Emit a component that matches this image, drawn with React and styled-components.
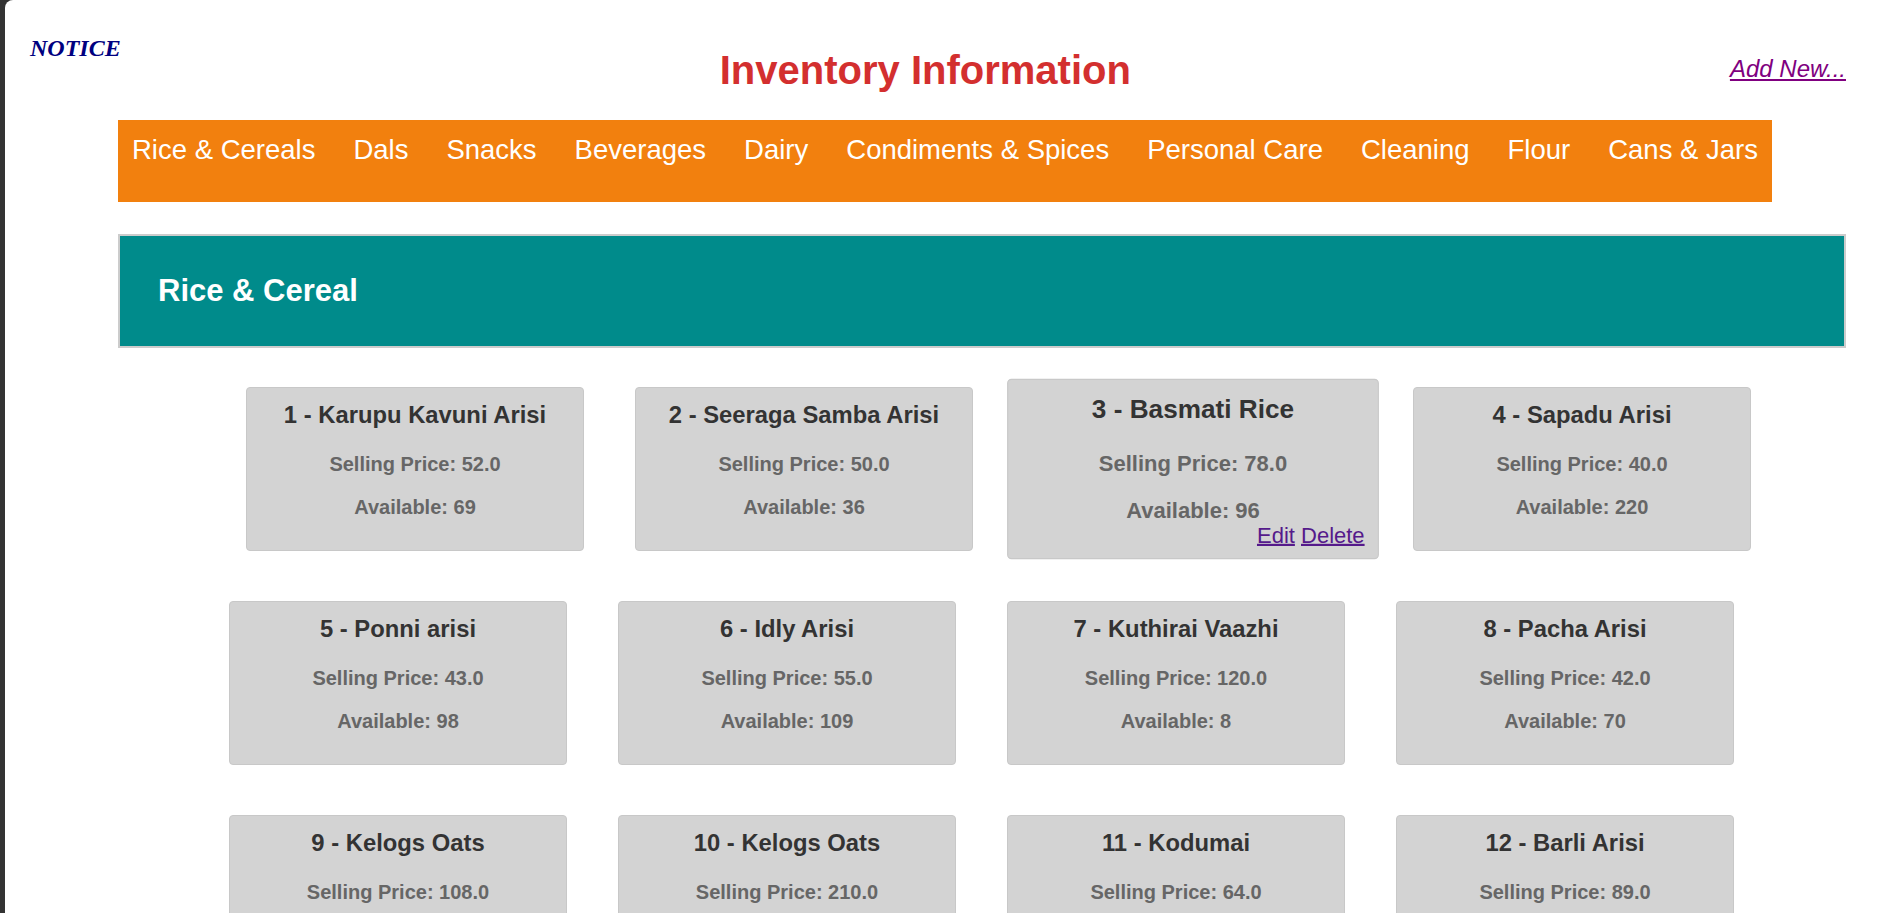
import React from "react";
import styled, { createGlobalStyle } from "styled-components";

const categories = [
  "Rice & Cereals",
  "Dals",
  "Snacks",
  "Beverages",
  "Dairy",
  "Condiments & Spices",
  "Personal Care",
  "Cleaning",
  "Flour",
  "Cans & Jars",
];

const products = [
  { id: 1, name: "Karupu Kavuni Arisi", price: "52.0", qty: 69 },
  { id: 2, name: "Seeraga Samba Arisi", price: "50.0", qty: 36 },
  { id: 3, name: "Basmati Rice", price: "78.0", qty: 96 },
  { id: 4, name: "Sapadu Arisi", price: "40.0", qty: 220 },
  { id: 5, name: "Ponni arisi", price: "43.0", qty: 98 },
  { id: 6, name: "Idly Arisi", price: "55.0", qty: 109 },
  { id: 7, name: "Kuthirai Vaazhi", price: "120.0", qty: 8 },
  { id: 8, name: "Pacha Arisi", price: "42.0", qty: 70 },
  { id: 9, name: "Kelogs Oats", price: "108.0", qty: 25 },
  { id: 10, name: "Kelogs Oats", price: "210.0", qty: 40 },
  { id: 11, name: "Kodumai", price: "64.0", qty: 50 },
  { id: 12, name: "Barli Arisi", price: "89.0", qty: 30 },
];

// split into rows of 4
const rows = [];
for (let i = 0; i < products.length; i += 4) {
  rows.push(products.slice(i, i + 4));
}

const App = () => {
  return (
    <>
      <GlobalStyle />
      <Page>
        <Header>
          <Notice>NOTICE</Notice>
          <Title>Inventory Information</Title>
          <AddNew href="#">Add New...</AddNew>
        </Header>
        <Main>
          <NavBar>
            {categories.map((c) => (
              <NavItem key={c}>{c}</NavItem>
            ))}
          </NavBar>
          <Banner>
            <BannerTitle>Rice &amp; Cereal</BannerTitle>
          </Banner>
          <CardGrid>
            {rows.map((row, idx) => (
              <CardRow key={idx} $shift={idx === 0}>
                {row.map((p) => (
                  <Card key={p.id} $raised={p.id === 3}>
                    <CardTitle>
                      {p.id} - {p.name}
                    </CardTitle>
                    <CardInfo>Selling Price: {p.price}</CardInfo>
                    <CardInfo $gap="19px">Available: {p.qty}</CardInfo>
                    <Actions $show={p.id === 3}>
                      <ActionLink href="#">Edit</ActionLink>{" "}
                      <ActionLink href="#">Delete</ActionLink>
                    </Actions>
                  </Card>
                ))}
              </CardRow>
            ))}
          </CardGrid>
        </Main>
      </Page>
    </>
  );
};

export default App;

const GlobalStyle = createGlobalStyle`
  html, body {
    margin: 0;
    padding: 0;
    height: 100%;
    overflow: hidden;
    background: #333333;
  }
  #root {
    height: 100%;
  }
`;

const Page = styled.div`
  box-sizing: border-box;
  margin-left: 5px;
  height: 100vh;
  overflow: hidden;
  background: #ffffff;
  border-top-left-radius: 8px;
  padding: 0 39px 0 25px;
  font-family: "Liberation Sans", Arial, sans-serif;
`;

const Header = styled.header`
  display: flex;
  justify-content: space-between;
  align-items: flex-start;
  height: 120px;
`;

const Notice = styled.div`
  margin-top: 34px;
  font-family: "Liberation Serif", "Times New Roman", serif;
  font-size: 24px;
  line-height: 28px;
  font-weight: bold;
  font-style: italic;
  color: #000080;
`;

const Title = styled.h1`
  margin: 47px 0 0;
  font-size: 40px;
  line-height: 46px;
  font-weight: bold;
  color: #d32f2f;
`;

const AddNew = styled.a`
  margin-top: 55px;
  font-size: 24px;
  line-height: 28px;
  font-style: italic;
  color: #800080;
  text-decoration: underline;
`;

const Main = styled.main`
  margin-left: 88px;
`;

const NavBar = styled.ul`
  box-sizing: border-box;
  display: flex;
  gap: 38px;
  width: fit-content;
  height: 82px;
  margin: 0;
  padding: 14px 14px 0;
  list-style: none;
  background: #f2800e;
`;

const NavItem = styled.li`
  font-size: 27.5px;
  line-height: 32px;
  color: #ffffff;
  white-space: nowrap;
  cursor: pointer;
`;

const Banner = styled.section`
  box-sizing: border-box;
  display: flex;
  align-items: center;
  height: 114px;
  margin-top: 32px;
  padding: 0 38px;
  border: 2px solid #cccccc;
  background: #008b8b;
`;

const BannerTitle = styled.h2`
  margin: 0;
  font-size: 31px;
  font-weight: bold;
  color: #ffffff;
`;

const CardGrid = styled.div`
  display: flex;
  flex-direction: column;
  gap: 50px;
  margin-top: 39px;
`;

const CardRow = styled.div`
  display: flex;
  justify-content: center;
  gap: 51px;
  padding-left: ${(p) => (p.$shift ? "34px" : "0")};
  margin-left: -1px;
`;

const Card = styled.div`
  box-sizing: border-box;
  display: flex;
  flex-direction: column;
  align-items: center;
  flex: 0 0 338px;
  height: 164px;
  padding-top: 12px;
  border: 1px solid #c8c8c8;
  border-radius: 4px;
  background: #d3d3d3;
  transform: ${(p) => (p.$raised ? "scale(1.1)" : "none")};
  position: relative;
  z-index: ${(p) => (p.$raised ? 1 : 0)};
`;

const CardTitle = styled.h3`
  margin: 0;
  font-size: 23.8px;
  line-height: 30px;
  font-weight: bold;
  color: #333333;
  white-space: nowrap;
`;

const CardInfo = styled.p`
  margin: ${(p) => p.$gap || "22px"} 0 0;
  font-size: 20px;
  line-height: 24px;
  font-weight: bold;
  color: #666666;
`;

const Actions = styled.div`
  align-self: stretch;
  padding-right: 12px;
  text-align: right;
  font-size: 20px;
  line-height: 20px;
  visibility: ${(p) => (p.$show ? "visible" : "hidden")};
`;

const ActionLink = styled.a`
  color: #551a8b;
  text-decoration: underline;
`;
